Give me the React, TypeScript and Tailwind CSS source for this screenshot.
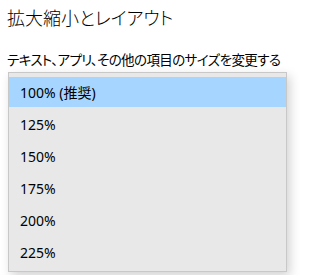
import React from 'react';

const options = ['100% (推奨)', '125%', '150%', '175%', '200%', '225%'];

const App: React.FC = () => {
  return (
    <div className="w-[309px] h-[275px] overflow-hidden bg-white text-black font-['Noto_Sans','Noto_Sans_CJK_JP',sans-serif] [font-feature-settings:'palt']">
      <div className="pl-[7px] pt-[4px]">
        <h1 className="text-[18px] leading-[28px] font-light">拡大縮小とレイアウト</h1>
        <p className="mt-[17px] text-[13.5px] leading-[22px] tracking-[-0.6px]">テキスト、アプリ、その他の項目のサイズを変更する</p>
      </div>
      <div className="ml-[8px] mt-[1px] w-[279px] h-[200px] border border-[#c8c8c8] bg-[#e8e8e8] py-[3px] shadow-[3px_4px_10px_rgba(0,0,0,0.18)]">
        {options.map((opt, i) => (
          <div key={opt} className="h-[32px] py-px">
            <div
              className={
                'h-[30px] flex items-center pl-[11px] text-[14px] ' +
                (i === 0 ? 'bg-[#a6d6ff]' : '')
              }
            >
              {opt}
            </div>
          </div>
        ))}
      </div>
    </div>
  );
};

export default App;
